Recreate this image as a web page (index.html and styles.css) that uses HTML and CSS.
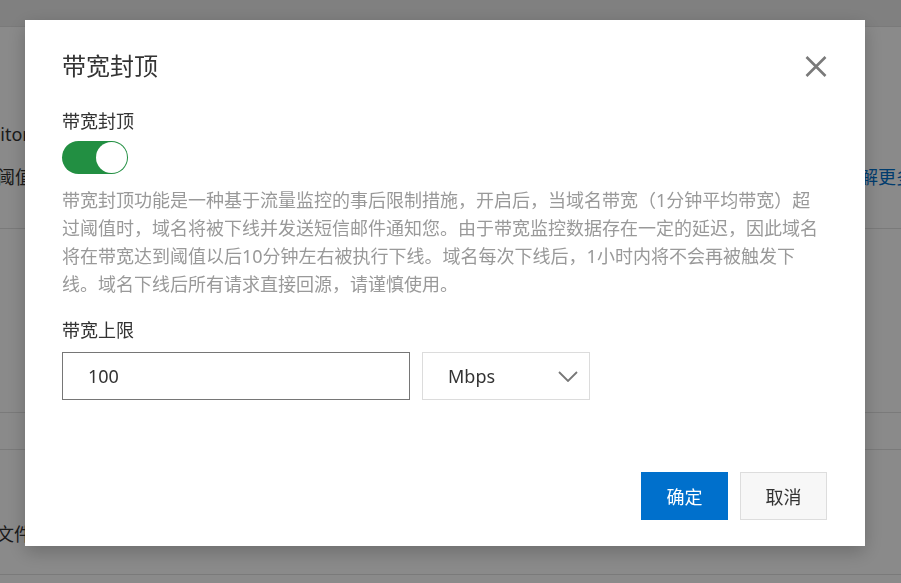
FILE: index.html
```html
<!DOCTYPE html>
<html lang="zh-CN">
<head>
<meta charset="utf-8">
<title>带宽封顶</title>
<link rel="stylesheet" href="styles.css">
</head>
<body>
<div class="page">
  <div class="bg-header"></div>
  <div class="bg-sec bg-sec1">
    <div class="bg-line bg-left-1">Monitor</div>
    <div class="bg-row">
      <span class="bg-left-2">带宽阈值</span>
      <span class="bg-link">了解更多</span>
    </div>
  </div>
  <div class="bg-sec bg-sec2"></div>
  <div class="bg-sec bg-sec3"></div>
  <div class="bg-sec bg-sec4">
    <div class="bg-line bg-left-3">日志文件</div>
  </div>
</div>

<div class="overlay">
  <div class="dialog">
    <div class="dialog-head">
      <h2 class="dialog-title">带宽封顶</h2>
      <button class="close" aria-label="关闭">
        <svg width="22" height="21" viewBox="0 0 22 21"><path d="M1.5 1 L20.5 20 M20.5 1 L1.5 20" stroke="#7a7a7a" stroke-width="2.6" fill="none"/></svg>
      </button>
    </div>
    <div class="field-label">带宽封顶</div>
    <div class="switch"><span class="knob"></span></div>
    <p class="desc">带宽封顶功能是一种基于流量监控的事后限制措施，开启后，当域名带宽（1分钟平均带宽）超过阈值时，域名将被下线并发送短信邮件通知您。由于带宽监控数据存在一定的延迟，因此域名将在带宽达到阈值以后10分钟左右被执行下线。域名每次下线后，1小时内将不会再被触发下线。域名下线后所有请求直接回源，请谨慎使用。</p>
    <div class="field-label label-limit">带宽上限</div>
    <div class="field-row">
      <div class="input">100</div>
      <div class="select">
        <span>Mbps</span>
        <svg width="20" height="11" viewBox="0 0 20 11"><polyline points="1,1 10,10 19,1" stroke="#777" stroke-width="1.8" fill="none"/></svg>
      </div>
    </div>
    <div class="footer">
      <button class="btn btn-primary">确定</button>
      <button class="btn btn-default">取消</button>
    </div>
  </div>
</div>
</body>
</html>
```
FILE: styles.css
```css
* { box-sizing: border-box; }
html, body { margin: 0; padding: 0; }
body {
  width: 901px;
  height: 583px;
  overflow: hidden;
  position: relative;
  background: #fff;
  font-family: "Noto Sans", "Noto Sans CJK SC", sans-serif;
  color: #333;
}
.page { width: 901px; height: 583px; overflow: hidden; }
.bg-header { height: 27px; background: #ececec; border-bottom: 1px solid #e2e2e2; }
.bg-sec { border-bottom: 1px solid #e2e2e2; }
.bg-sec1 { height: 202px; padding-top: 94px; }
.bg-sec2 { height: 184px; }
.bg-sec3 { height: 37px; }
.bg-sec4 { height: 125px; padding-top: 71px; }
.bg-line { font-size: 18px; line-height: 26px; color: #333; }
.bg-left-1 { margin-left: -38px; }
.bg-left-3 { margin-left: -40px; }
.bg-row {
  margin-top: 17px;
  display: flex;
  justify-content: space-between;
  font-size: 18px;
  line-height: 26px;
}
.bg-left-2 { margin-left: -39px; color: #333; }
.bg-link { margin-right: -13px; color: #0070cc; }

.overlay {
  position: fixed;
  inset: 0;
  background: rgba(0, 0, 0, 0.46);
  padding: 20px 0 0 25px;
}
.dialog {
  width: 840px;
  height: 526px;
  background: #fff;
  padding: 30px 38px 26px 37px;
  display: flex;
  flex-direction: column;
  box-shadow: 0 6px 18px rgba(0, 0, 0, 0.22);
}
.dialog-head {
  display: flex;
  justify-content: space-between;
  align-items: center;
  height: 32px;
}
.dialog-title {
  margin: 0;
  font-size: 24px;
  line-height: 32px;
  font-weight: normal;
  color: #333;
}
.close {
  border: 0;
  background: none;
  padding: 0;
  width: 22px;
  height: 21px;
  display: block;
}
.close svg { display: block; }
.field-label {
  margin-top: 26px;
  font-size: 18px;
  line-height: 26px;
  color: #333;
}
.switch {
  margin-top: 7px;
  width: 66px;
  height: 33px;
  border-radius: 17px;
  background: #228f42;
  position: relative;
}
.knob {
  position: absolute;
  top: 1px;
  right: 1px;
  width: 31px;
  height: 31px;
  border-radius: 50%;
  background: #fff;
}
.desc {
  margin: 12px 0 0;
  max-width: 762px;
  font-size: 18px;
  line-height: 28px;
  color: #999;
}
.label-limit { margin-top: 19px; }
.field-row {
  margin-top: 9px;
  display: flex;
  gap: 12px;
}
.input {
  width: 348px;
  height: 48px;
  border: 1px solid #767676;
  padding-left: 25px;
  font-size: 18px;
  line-height: 46px;
  color: #333;
}
.select {
  width: 168px;
  height: 48px;
  border: 1px solid #dcdcdc;
  padding: 0 11px 0 25px;
  display: flex;
  align-items: center;
  justify-content: space-between;
  font-size: 18px;
  color: #333;
}
.select svg { display: block; }
.footer {
  margin-top: auto;
  display: flex;
  justify-content: flex-end;
  gap: 12px;
}
.btn {
  width: 87px;
  height: 48px;
  font-family: inherit;
  font-size: 18px;
  padding: 0;
  cursor: pointer;
}
.btn-primary { background: #0070cc; color: #fff; border: 1px solid #0070cc; }
.btn-default { background: #f7f7f7; color: #333; border: 1px solid #dddddd; }
```
